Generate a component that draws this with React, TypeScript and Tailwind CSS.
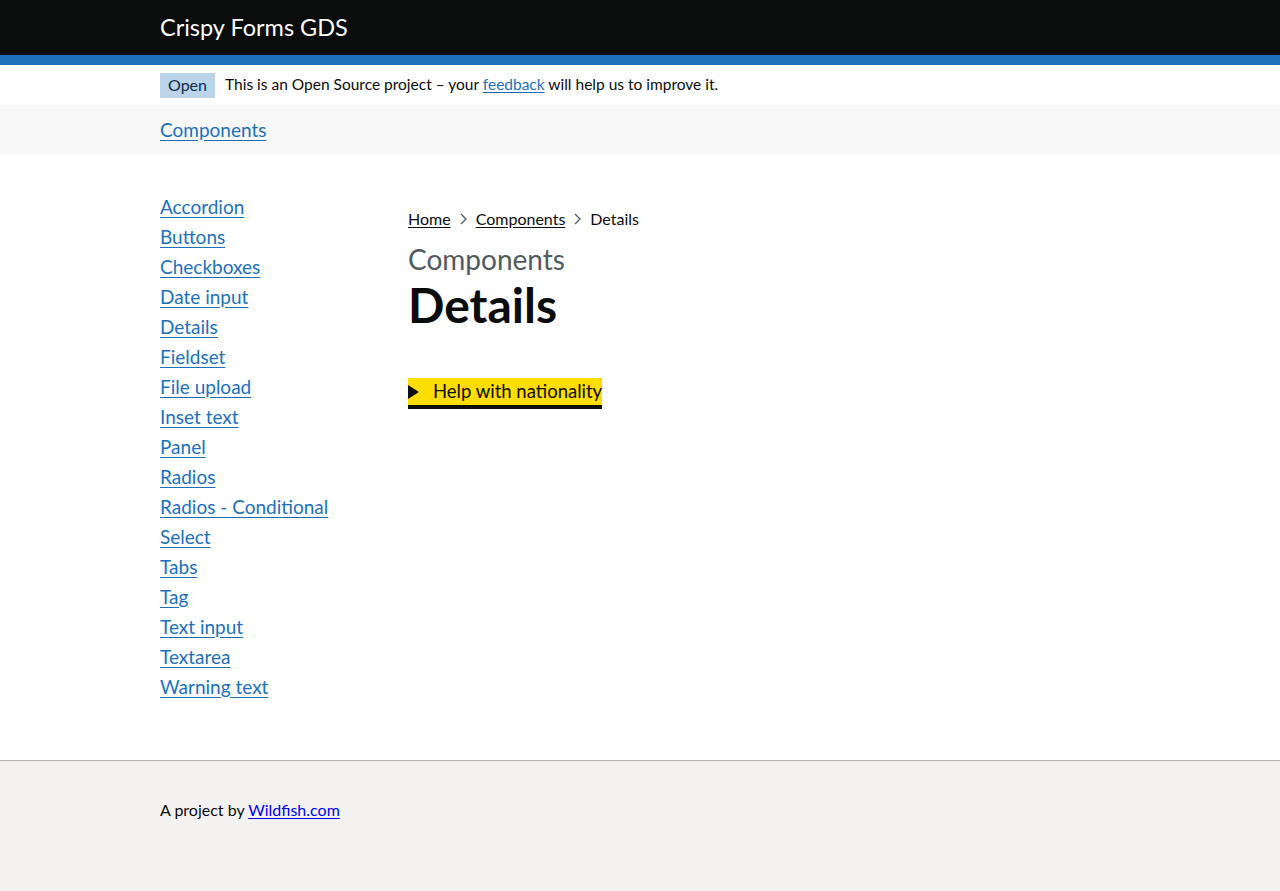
import React from "react";

const links = [
  "Accordion",
  "Buttons",
  "Checkboxes",
  "Date input",
  "Details",
  "Fieldset",
  "File upload",
  "Inset text",
  "Panel",
  "Radios",
  "Radios - Conditional",
  "Select",
  "Tabs",
  "Tag",
  "Text input",
  "Textarea",
  "Warning text",
];

const Chevron = () => (
  <svg width="7" height="12" viewBox="0 0 7 12" className="mx-[9px] shrink-0">
    <path d="M1 1l5 5-5 5" fill="none" stroke="#505a5f" strokeWidth="1.3" />
  </svg>
);

export default function App() {
  return (
    <div className="min-h-[891px] flex flex-col bg-white text-[#0b0c0c]" style={{ fontFamily: 'Lato, "Noto Sans", Arial, sans-serif' }}>
      <header className="bg-[#0b0c0c]">
        <div className="h-[55px] pl-[160px] flex items-center">
          <span className="text-white text-[23.5px] leading-none">Crispy Forms GDS</span>
        </div>
        <div className="h-[10px] bg-[#1d70b8]" />
      </header>

      <div className="h-[40px] pl-[160px] flex items-center">
        <span className="bg-[#bbd4ea] text-[#0c2d4a] text-[16px] h-[25px] px-[8px] flex items-center">Open</span>
        <span className="ml-[10px] text-[15.5px]">
          This is an Open Source project – your{" "}
          <a href="#" className="text-[#1d70b8] underline underline-offset-2">feedback</a> will help us to improve it.
        </span>
      </div>

      <nav className="h-[50px] bg-[#f8f8f8] pl-[160px] flex items-center">
        <a href="#" className="text-[19px] text-[#1d70b8] underline underline-offset-[3px]">Components</a>
      </nav>

      <main className="flex-1 flex pl-[160px] pt-[36px] pb-[52px]">
        <ul className="w-[248px] shrink-0 flex flex-col">
          {links.map((l) => (
            <li key={l} className="h-[30px] flex items-center">
              <a href="#" className="text-[19px] leading-none text-[#1d70b8] underline underline-offset-[3px]">{l}</a>
            </li>
          ))}
        </ul>
        <div className="flex flex-col">
          <div className="flex items-center text-[16px] mt-[18px] h-[20px]">
            <a href="#" className="underline underline-offset-2 text-[#0b0c0c]">Home</a>
            <Chevron />
            <a href="#" className="underline underline-offset-2 text-[#0b0c0c]">Components</a>
            <Chevron />
            <span>Details</span>
          </div>
          <div className="mt-[15px] text-[28px] leading-[30px] text-[#505a5f]">Components</div>
          <h1 className="mt-[4px] text-[48px] leading-[54px] font-bold">Details</h1>
          <div className="mt-[46px] self-start flex items-center bg-[#ffdd00] border-b-4 border-[#0b0c0c] h-[31px] pr-0">
            <svg width="12" height="14" viewBox="0 0 12 14" className="shrink-0">
              <path d="M0 0l11 7-11 7z" fill="#0b0c0c" />
            </svg>
            <span className="ml-[13px] text-[18.5px] leading-none">Help with nationality</span>
          </div>
        </div>
      </main>

      <footer className="h-[131px] bg-[#f3f2f1] border-t border-[#b1b4b6] pl-[160px] pt-[37px]">
        <span className="text-[16px]">
          A project by <a href="#" className="text-[#0000ee] underline underline-offset-2">Wildfish.com</a>
        </span>
      </footer>
    </div>
  );
}
